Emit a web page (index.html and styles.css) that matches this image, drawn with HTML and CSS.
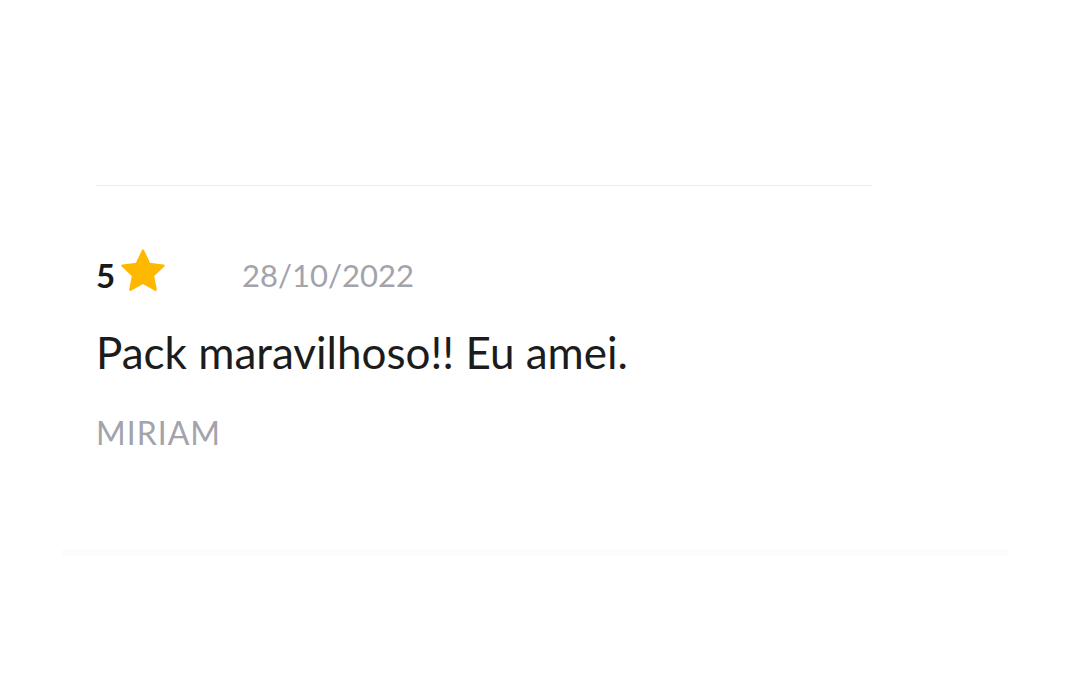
FILE: index.html
```html
<!DOCTYPE html>
<html lang="pt-BR">
<head>
    <meta charset="UTF-8">
    <meta name="viewport" content="width=device-width, initial-scale=1.0">
    <title>Avaliações</title>
    <link rel="stylesheet" href="styles.css">
</head>
<body>
    <div class="reviews">
        <div class="review">
            <div class="review-meta">
                <div class="review-rating">
                    <span class="rating-value">5</span>
                    <svg class="rating-star" viewBox="0 0 24 24" width="50" height="50" aria-hidden="true">
                        <path d="M12 1.8l2.95 6.3 6.85.85-5.05 4.75 1.3 6.8L12 17.15 5.95 20.5l1.3-6.8L2.2 8.95l6.85-.85z" fill="#ffb800" stroke="#ffb800" stroke-width="1.2" stroke-linejoin="round"/>
                    </svg>
                </div>
                <div class="review-date">28/10/2022</div>
            </div>
            <p class="review-text">Pack maravilhoso!! Eu amei.</p>
            <div class="review-author">MIRIAM</div>
        </div>
        <div class="reviews-bottom"></div>
    </div>
</body>
</html>
```

FILE: styles.css
```css
body {
    margin: 0;
    background: #ffffff;
    font-family: Lato, "Noto Sans", sans-serif;
}

.reviews {
    padding-top: 185px;
}

.review {
    width: 776px;
    margin-left: 96px;
    border-top: 1px solid #ebebeb;
    padding-top: 69px;
}

.review-meta {
    display: flex;
    align-items: center;
    height: 40px;
}

.review-rating {
    display: flex;
    align-items: center;
    gap: 3px;
    width: 146px;
}

.rating-value {
    font-size: 33px;
    line-height: 40px;
    font-weight: 700;
    color: #1a1a1a;
}

.rating-star {
    display: block;
    margin: -9px 0 -3px;
}

.review-date {
    font-size: 31px;
    line-height: 40px;
    color: #a2a3ab;
}

.review-text {
    margin: 31px 0 0;
    font-size: 44px;
    line-height: 52px;
    color: #1c1c1c;
}

.review-author {
    margin-top: 35px;
    font-size: 32px;
    line-height: 40px;
    letter-spacing: 1px;
    color: #a2a3ab;
}

.reviews-bottom {
    margin: 96px 0 0 62px;
    width: 946px;
    height: 7px;
    background: #fcfcfc;
}
```
